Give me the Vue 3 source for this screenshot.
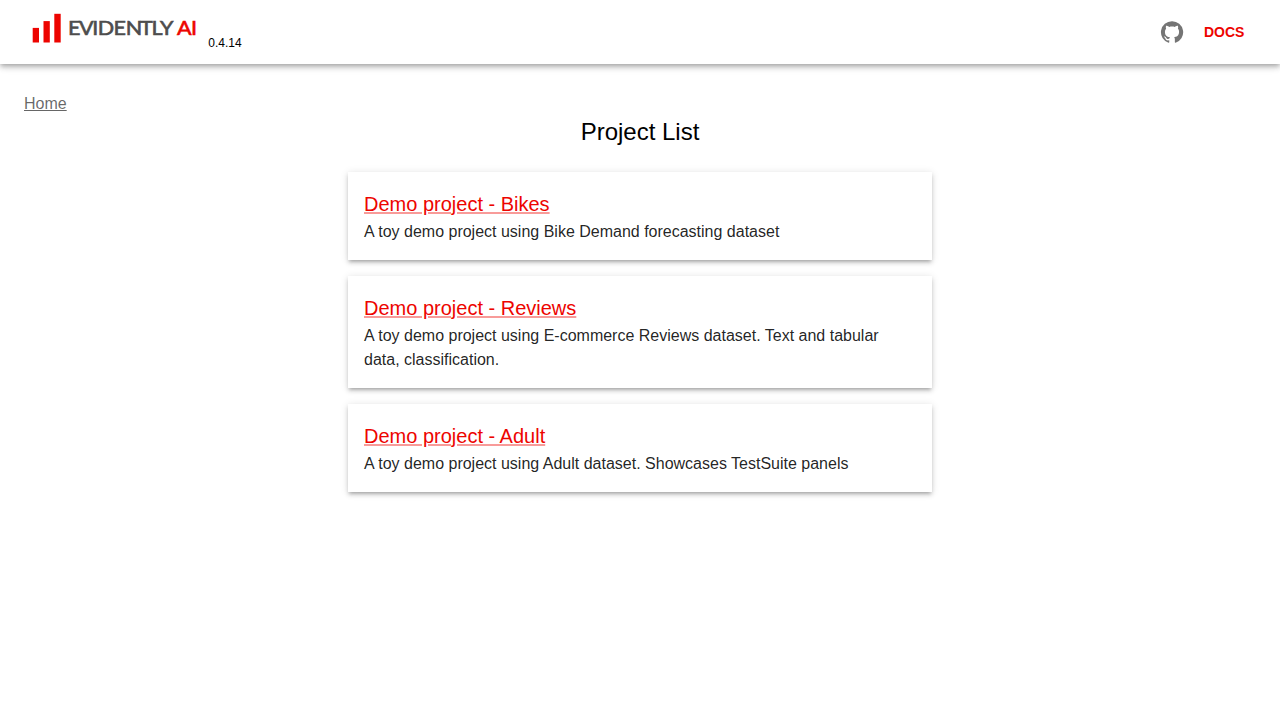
<script setup>
const projects = [
  { name: 'Demo project - Bikes', text: 'A toy demo project using Bike Demand forecasting dataset' },
  { name: 'Demo project - Reviews', text: 'A toy demo project using E-commerce Reviews dataset. Text and tabular data, classification.' },
  { name: 'Demo project - Adult', text: 'A toy demo project using Adult dataset. Showcases TestSuite panels' },
]
</script>

<template>
  <div class="page">
    <header class="bar">
      <div class="brand">
        <svg class="logo" width="184" height="56" viewBox="0 0 184 56">
          <g fill="#ed0400">
            <rect x="8.7" y="23.9" width="6.3" height="14.6" />
            <rect x="19.5" y="17.1" width="6.3" height="21.4" />
            <rect x="30.3" y="9.8" width="6.4" height="28.7" />
          </g>
          <g transform="scale(1.1 1)">
            <text class="word" x="39.9 49.9 62 67 81.4 92.6 105.4 115.9 123.6" y="31.2">EVIDENTLY</text>
            <text class="word ai" x="139.1 151.8" y="31.2">AI</text>
          </g>
        </svg>
        <span class="version">0.4.14</span>
      </div>
      <nav class="links">
        <a class="github"><svg width="24" height="24" viewBox="0 0 24 24"><path fill="currentColor" d="M12 1.27a11 11 0 00-3.48 21.46c.55.09.73-.28.73-.55v-1.84c-3.03.64-3.67-1.46-3.67-1.46-.55-1.29-1.28-1.65-1.28-1.65-.92-.65.1-.65.1-.65 1.1 0 1.73 1.1 1.73 1.1.92 1.65 2.57 1.2 3.21.92a2 2 0 01.64-1.47c-2.47-.27-5.04-1.19-5.04-5.5 0-1.1.46-2.1 1.2-2.84a3.76 3.76 0 010-2.93s.91-.28 3.11 1.1c1.8-.49 3.7-.49 5.5 0 2.1-1.38 3.02-1.1 3.02-1.1a3.76 3.76 0 01.1 2.93c.83.74 1.2 1.74 1.2 2.94 0 4.21-2.57 5.13-5.04 5.4.45.37.82.92.82 2.02v3.03c0 .27.1.64.73.55A11 11 0 0012 1.27" /></svg></a>
        <a class="docs">DOCS</a>
      </nav>
    </header>
    <a class="home">Home</a>
    <main class="content">
      <h1>Project List</h1>
      <section v-for="p in projects" :key="p.name" class="card">
        <a class="title">{{ p.name }}</a>
        <p>{{ p.text }}</p>
      </section>
    </main>
  </div>
</template>

<style>
body { background: #fff; }
</style>

<style scoped>
.page { font-family: "Liberation Sans", Arial, sans-serif; height: 720px; overflow: hidden; color: #000; }
.bar { height: 64px; box-sizing: border-box; padding: 0 24px; display: flex; justify-content: space-between; box-shadow: 0 2px 4px -1px rgba(0,0,0,.2), 0 4px 5px 0 rgba(0,0,0,.14), 0 1px 10px 0 rgba(0,0,0,.12); }
.brand { display: flex; align-items: flex-start; }
.logo { margin-top: 4px; }
.word { font-family: Lato, "Liberation Sans", sans-serif; font-size: 19.6px; font-weight: 400; fill: #4d4d4d; stroke: #4d4d4d; stroke-width: .6px; }
.ai { fill: #ed0400; stroke: #ed0400; }
.version { font-size: 12px; line-height: 20px; margin: 33px 0 0 .3px; }
.links { display: flex; align-items: center; }
.github { display: flex; color: rgba(0,0,0,.54); padding: 12px; }
.docs { color: #ed0400; font-size: 14px; font-weight: 700; line-height: 24px; width: 40.5px; padding: 0 11.5px 0 8px; }
.home { display: block; width: max-content; margin: 28px 24px 0; font-size: 16px; line-height: 24px; color: rgba(0,0,0,.6); text-decoration: underline; }
.content { width: 584px; margin: 0 auto; }
h1 { font-size: 24px; font-weight: 400; line-height: 32px; text-align: center; margin: 0 0 24px; }
.card { box-sizing: border-box; padding: 16px; margin-bottom: 16px; box-shadow: 0 3px 3px -2px rgba(0,0,0,.2), 0 3px 4px 0 rgba(0,0,0,.14), 0 1px 8px 0 rgba(0,0,0,.12); }
.title { display: block; width: max-content; font-size: 20px; line-height: 32px; color: #ed0400; text-decoration: underline; text-decoration-color: rgba(237,4,0,.4); }
.card p { margin: 0; font-size: 16px; line-height: 24px; color: rgba(0,0,0,.87); }
</style>
